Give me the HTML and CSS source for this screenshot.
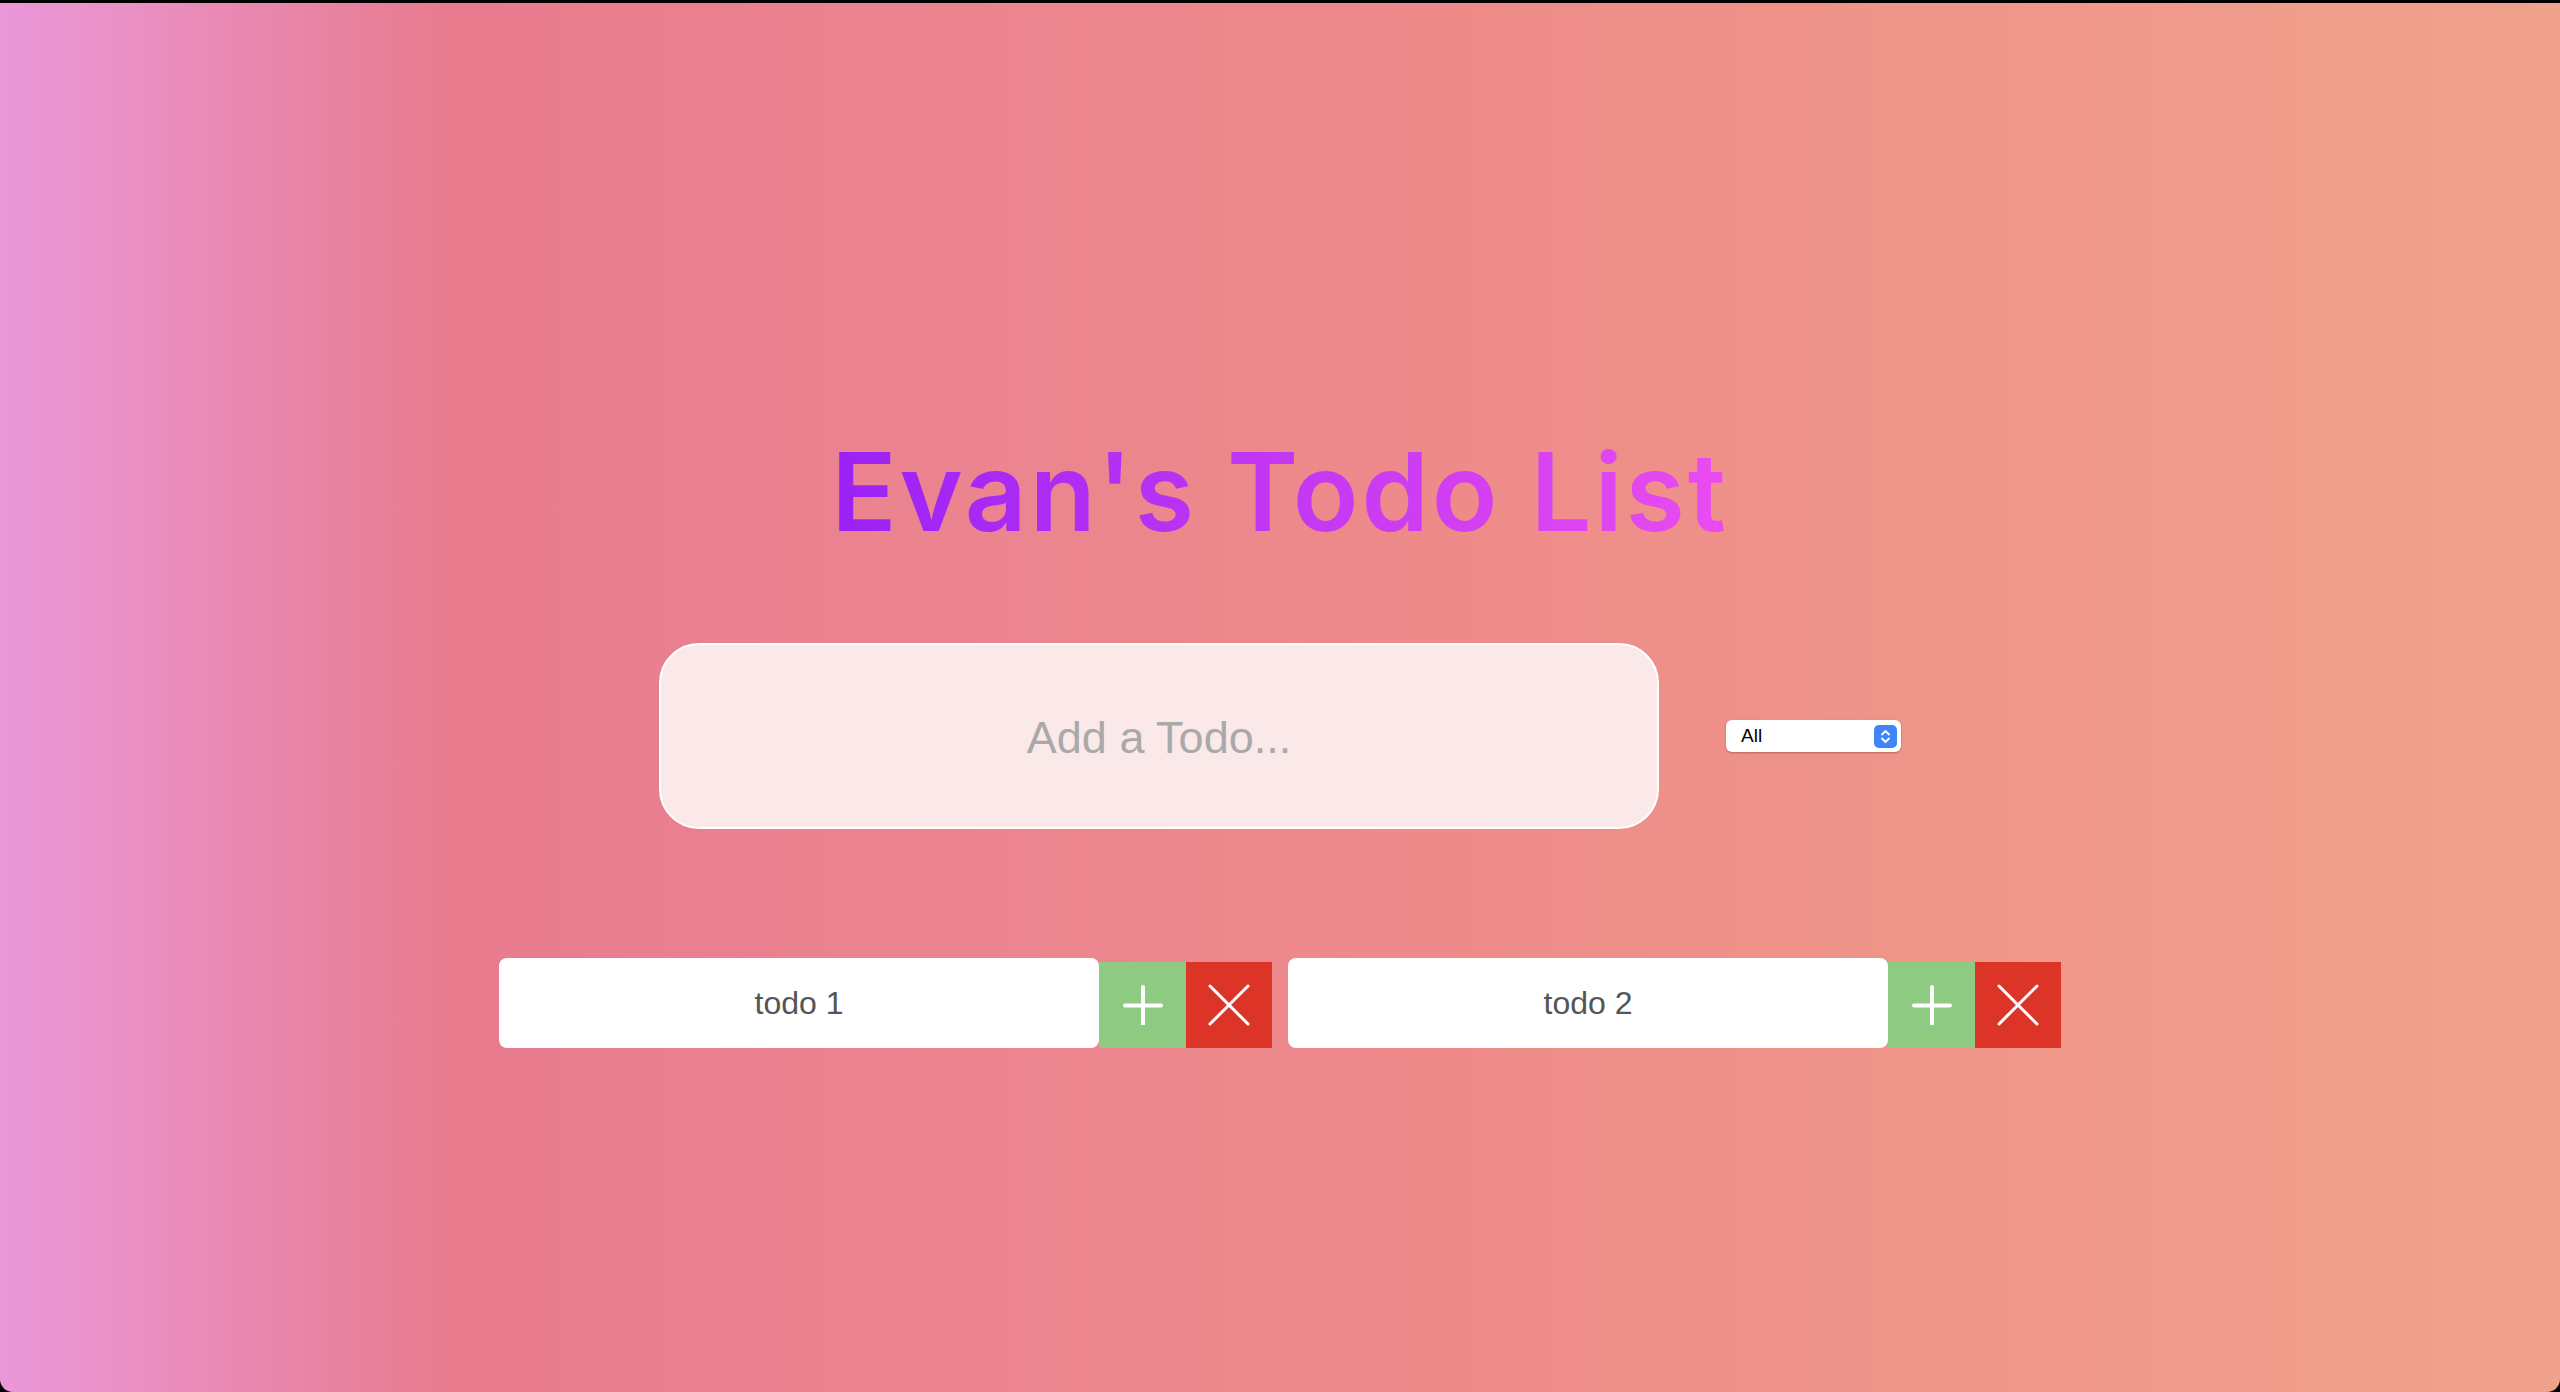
FILE: index.html
```html
<!DOCTYPE html>
<html lang="en">
<head>
<meta charset="utf-8">
<title>Evan's Todo List</title>
<link rel="stylesheet" href="styles.css">
</head>
<body>
<div class="window">
  <header class="header">
    <h1 class="title">Evan's Todo List</h1>
  </header>
  <form class="add-form">
    <input class="todo-input" type="text" placeholder="Add a Todo...">
    <div class="filter">
      <span class="filter-label">All</span>
      <span class="filter-arrows">
        <svg width="23" height="23" viewBox="0 0 23 23"><path d="M8 9.5 L11.5 6 L15 9.5 M8 13.5 L11.5 17 L15 13.5" fill="none" stroke="#fff" stroke-width="1.8" stroke-linecap="round" stroke-linejoin="round"/></svg>
      </span>
    </div>
  </form>
  <div class="todo-container">
    <ul class="todo-list">
      <li class="todo">
        <div class="todo-item">todo 1</div>
        <button class="btn btn-complete" type="button">
          <svg width="40" height="40" viewBox="0 0 40 40"><path d="M20 2 V39 M2 20.5 H38" stroke="#fff" stroke-width="4" stroke-linecap="round"/></svg>
        </button>
        <button class="btn btn-trash" type="button">
          <svg width="42" height="42" viewBox="0 0 42 42"><path d="M2 2 L40 40 M40 2 L2 40" stroke="#fff" stroke-width="3" stroke-linecap="round"/></svg>
        </button>
      </li>
      <li class="todo">
        <div class="todo-item">todo 2</div>
        <button class="btn btn-complete" type="button">
          <svg width="40" height="40" viewBox="0 0 40 40"><path d="M20 2 V39 M2 20.5 H38" stroke="#fff" stroke-width="4" stroke-linecap="round"/></svg>
        </button>
        <button class="btn btn-trash" type="button">
          <svg width="42" height="42" viewBox="0 0 42 42"><path d="M2 2 L40 40 M40 2 L2 40" stroke="#fff" stroke-width="3" stroke-linecap="round"/></svg>
        </button>
      </li>
    </ul>
  </div>
</div>
</body>
</html>
```
FILE: styles.css
```css
* { box-sizing: border-box; }
html { background: #000; }
body {
  margin: 0;
  padding-top: 3px;
  background: #000;
}
.window {
  height: 1389px;
  border-radius: 0 0 13px 13px;
  background: linear-gradient(to right, #ea98da 0%, #e87b8e 17.5%, #eb8390 35%, #ee8a8a 55%, #ef9589 75%, #f0a28d 100%);
  display: flex;
  flex-direction: column;
  align-items: center;
  padding-top: 435px;
  font-family: "Liberation Sans", Arial, sans-serif;
}
.header { display: flex; justify-content: center; }
.title {
  margin: 0;
  font-family: Inter, "Noto Sans", sans-serif;
  font-weight: 600;
  font-size: 108px;
  line-height: 1;
  letter-spacing: 2.9px;
  background: linear-gradient(to right, #9a22f5, #ea4cf0);
  -webkit-background-clip: text;
  background-clip: text;
  color: transparent;
}
.add-form {
  margin-top: 97px;
  display: flex;
  align-items: center;
  gap: 67px;
}
.todo-input {
  width: 1000px;
  height: 186px;
  border: 2px solid #fff;
  border-radius: 40px;
  background: #fbe8e9;
  text-align: center;
  padding-top: 4px;
  font-family: "Liberation Sans", Arial, sans-serif;
  font-size: 45px;
  color: #444;
  outline: none;
}
.todo-input::placeholder { color: #a9a9a9; }
.filter {
  width: 175px;
  height: 32px;
  background: #fff;
  border-radius: 6px;
  box-shadow: 0 1px 2px rgba(120, 40, 40, 0.45);
  display: flex;
  align-items: center;
  justify-content: space-between;
  padding: 0 4px 0 15px;
}
.filter-label {
  font-family: "Liberation Sans", Arial, sans-serif;
  font-size: 19px;
  color: #000;
}
.filter-arrows {
  width: 23px;
  height: 23px;
  border-radius: 5px;
  background: #3f85f7;
  display: flex;
}
.todo-container {
  margin-top: 129px;
}
.todo-list {
  list-style: none;
  margin: 0;
  padding: 0;
  display: flex;
  gap: 16px;
}
.todo {
  display: flex;
  align-items: flex-end;
}
.todo-item {
  width: 600px;
  height: 90px;
  background: #fff;
  border-radius: 8px;
  display: flex;
  align-items: center;
  justify-content: center;
  font-size: 32px;
  color: #555;
}
.btn {
  width: 87px;
  height: 86px;
  border: none;
  padding: 0;
  margin: 0;
  display: flex;
  align-items: center;
  justify-content: center;
  cursor: pointer;
}
.btn-trash { width: 86px; }
.btn-complete { background: #8fca83; }
.btn-trash { background: #dd3428; }
```
